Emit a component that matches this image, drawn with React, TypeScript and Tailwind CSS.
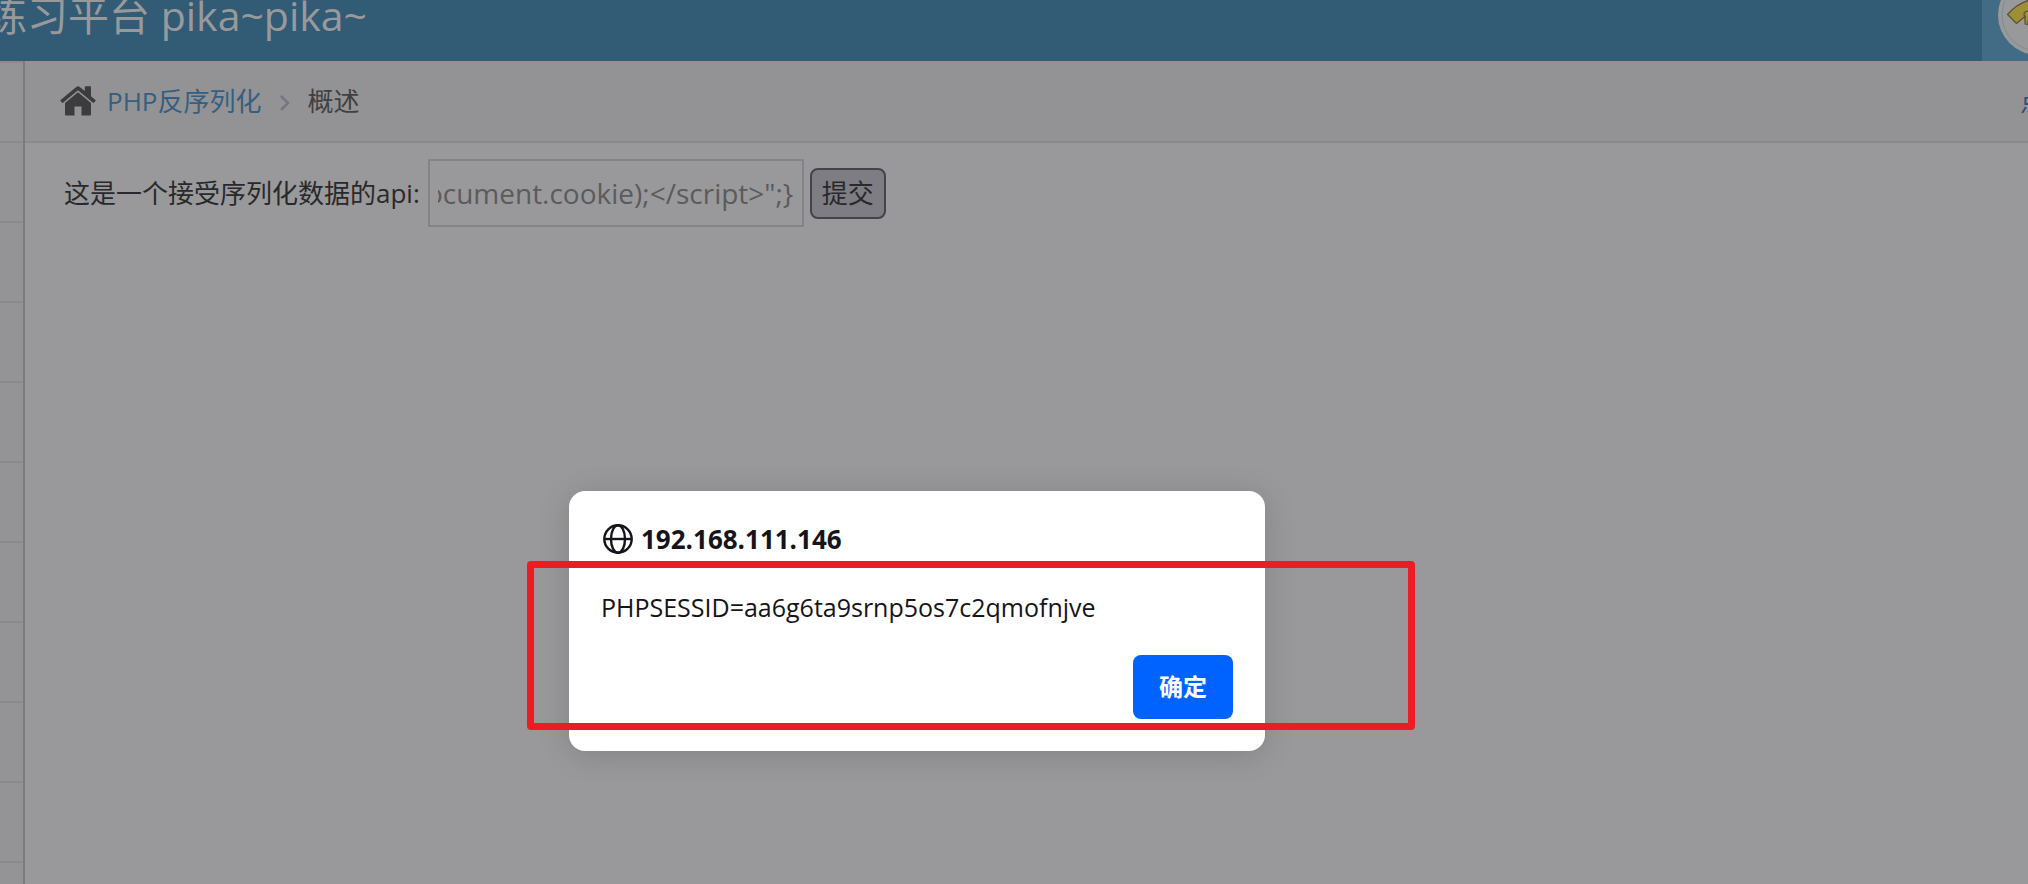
import { useEffect, useRef, useState } from "react";

const MENU_ROWS = 12;

function HomeIcon() {
  return (
    <svg className="w-9 h-[30px] shrink-0" viewBox="0 0 36 30" fill="#3c3c3e" aria-hidden="true">
      <path d="M18 6.2 31 17V28.4a1 1 0 0 1-1 1H21.5v-9h-7v9H6a1 1 0 0 1-1-1V17Z" />
      <path d="M16.3.9a2.6 2.6 0 0 1 3.4 0L24.8 5.1V.9a.7.7 0 0 1 .7-.7h4.800a.7.7 0 0 1 .7.7V10.300l4.400 3.700a.7.7 0 0 1 .1 1l-1.400 1.600a.8.8 0 0 1-1.100.1L18 4.200 3 16.700a.8.8 0 0 1-1.100-.1L.5 15a.7.7 0 0 1 .1-1Z" />
    </svg>
  );
}

function ChevronIcon() {
  return (
    <svg className="w-3 h-[18px] mt-1 shrink-0" viewBox="0 0 12 18" fill="none" stroke="#77767e" strokeWidth="2.6" aria-hidden="true">
      <path d="m2 2 7 7-7 7" />
    </svg>
  );
}

function GlobeIcon() {
  return (
    <svg className="size-[30px] shrink-0" viewBox="0 0 30 30" fill="none" stroke="#15141a" strokeWidth="2.4" aria-hidden="true">
      <circle cx="15" cy="15" r="13.7" />
      <ellipse cx="15" cy="15" rx="7" ry="13.7" />
      <path d="M1.5 15h27" />
    </svg>
  );
}

function Avatar() {
  return (
    <svg className="size-20 shrink-0" viewBox="0 0 80 80" aria-hidden="true">
      <circle cx="40" cy="40" r="40" fill="#99999b" />
      <circle cx="40" cy="40" r="36" fill="none" stroke="#7d8c94" strokeWidth="1" />
      <path
        d="M9.5 39.5C15 33 22 28 30 25.5L44 24V46H30V49.5L27 49V41.5L18.5 48.5Z"
        fill="#9c8f37"
        stroke="#55522f"
        strokeWidth="1.2"
      />
      <path d="M27 42c-2-3-1-6 3-6" fill="none" stroke="#55522f" strokeWidth="1.2" />
    </svg>
  );
}

export default function App() {
  const [value, setValue] = useState('document.cookie);</script>";}');
  const inputRef = useRef<HTMLInputElement>(null);

  // keep the end of the payload in view
  useEffect(() => {
    const el = inputRef.current;
    if (el) el.scrollLeft = el.scrollWidth;
  }, []);

  return (
    <div className="relative h-screen flex flex-col overflow-hidden bg-[#99999b] font-['Open_Sans','Noto_Sans_CJK_SC',sans-serif] text-[26px] text-[#29292b]">
      <header className="h-[61px] shrink-0 flex items-end justify-between bg-[#325b75] overflow-hidden">
        <h1 className="-ml-3.5 pb-4 text-[41px] leading-[60px] text-[#99999b] whitespace-nowrap">
          练习平台 pika~pika~
        </h1>
        <div className="w-[46px] h-full flex items-end pl-4 pb-1.5 bg-[#426b86] overflow-hidden">
          <Avatar />
        </div>
      </header>

      <div className="flex-1 flex min-h-0">
        <aside className="w-[25px] shrink-0 overflow-hidden bg-[#949496] border-r-2 border-[#7b7b7d]">
          <ul className="border-t-2 border-[#8a8a8c]">
            {Array.from({ length: MENU_ROWS }, (_, i) => (
              <li key={i} className="h-20 border-b-2 border-[#8a8a8c]" />
            ))}
          </ul>
        </aside>

        <div className="flex-1 min-w-0">
          <nav className="h-[82px] flex items-center justify-between pl-[35px] bg-[#939395] border-b-2 border-[#8a8a8c] overflow-hidden">
            <ol className="flex items-center gap-[18px]">
              <li className="flex items-center gap-[11px]">
                <HomeIcon />
                <a href="#" className="text-[#345f80]">PHP反序列化</a>
              </li>
              <li className="flex items-center gap-4 text-[#404042]">
                <ChevronIcon />
                概述
              </li>
            </ol>
            <a href="#" className="w-2 overflow-hidden whitespace-nowrap text-[#2b527c]">点</a>
          </nav>

          <main className="pt-4 pl-[39px]">
            <form className="flex items-center" onSubmit={(e) => e.preventDefault()}>
              <label htmlFor="payload" className="pr-2 whitespace-nowrap">
                这是一个接受序列化数据的api:
              </label>
              <input
                id="payload"
                ref={inputRef}
                type="text"
                value={value}
                onChange={(e) => setValue(e.target.value)}
                className="w-[376px] h-[68px] px-2 border-2 border-[#848486] bg-transparent text-[28px] text-[#5b5b5d]"
              />
              <button type="submit" className="ml-1.5 h-[51px] px-2.5 leading-none rounded-lg border-2 border-[#44434b] bg-[#7e7d84]">
                提交
              </button>
            </form>
          </main>
        </div>
      </div>

      <div
        role="dialog"
        aria-labelledby="alert-origin"
        className="absolute left-[569px] top-[491px] w-[696px] p-8 flex flex-col rounded-2xl bg-white text-[#15141a] shadow-[0_4px_32px_rgba(0,0,0,0.15)]"
      >
        <div className="flex items-center gap-2 h-8 pl-0.5">
          <GlobeIcon />
          <h2 id="alert-origin" className="text-[26px] font-bold">192.168.111.146</h2>
        </div>
        <p className="mt-8 h-10 leading-10 text-[25px]">PHPSESSID=aa6g6ta9srnp5os7c2qmofnjve</p>
        <button type="button" className="self-end mt-7 w-[100px] h-16 rounded-lg bg-[#0062ff] text-2xl font-bold text-white">
          确定
        </button>
      </div>

      <div className="absolute left-[527px] top-[561px] w-[888px] h-[169px] border-[7px] border-[#ed1c24] rounded pointer-events-none" />
    </div>
  );
}
